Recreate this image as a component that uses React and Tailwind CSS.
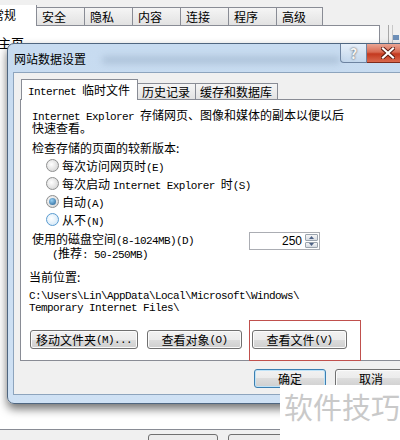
import React from 'react';

const A = ({ children }) => (
  <span className="font-['Liberation_Mono',monospace] text-[11px] leading-[0] tracking-[-0.6px]">{children}</span>
);

const Radio = ({ checked, hover, children }) => (
  <div className="flex h-[18px] items-center gap-[3px] pl-[14px]">
    <span
      className={`flex h-[13px] w-[13px] items-center justify-center rounded-full border ${
        hover
          ? 'border-[#5a9bd0] bg-[radial-gradient(circle_at_40%_40%,#ffffff,#c9e3f6)]'
          : 'border-[#8e8f8f] bg-[radial-gradient(circle_at_40%_40%,#ffffff,#cdcdcd)]'
      }`}
    >
      {checked && (
        <span className="h-[7px] w-[7px] rounded-full bg-[radial-gradient(circle_at_40%_35%,#9ad2f5,#1d5a8e)]" />
      )}
    </span>
    <span className="leading-[13px]">{children}</span>
  </div>
);

const Btn = ({ w, def, children }) => (
  <div
    className={`flex h-[19px] items-center justify-center rounded-[3px] border bg-[linear-gradient(#f2f2f2_0%,#ebebeb_50%,#dddddd_50%,#cfcfcf_100%)] leading-[13px] ${
      def ? 'border-[#3c7fb1] shadow-[inset_0_0_0_1px_#bfe3f8]' : 'border-[#707070] shadow-[inset_0_0_0_1px_#fbfbfb]'
    } ${w}`}
  >
    {children}
  </div>
);

const BgTab = ({ children }) => (
  <div className="h-[18px] w-[48px] border border-b-0 border-l-0 border-[#898c95] bg-gradient-to-b from-[#f5f5f5] to-[#e2e2e2] pl-[5px] leading-[17px]">
    {children}
  </div>
);

export default function App() {
  return (
    <div className="relative h-[440px] w-[400px] overflow-hidden bg-[#f0f0f0] font-['Noto_Sans_CJK_SC','Noto_Sans',sans-serif] text-[12px] text-black">
      {/* Internet options window behind */}
      <div className="flex h-full flex-col">
        <div className="flex h-[25px] items-end">
          <div className="relative z-10 -mb-[1px] flex h-[21px] w-[37px] justify-end overflow-hidden border-r border-[#898c95] bg-white pr-[20px] pt-[2px] leading-[16px]">
            <span className="whitespace-nowrap">常规</span>
          </div>
          <BgTab>安全</BgTab>
          <BgTab>隐私</BgTab>
          <BgTab>内容</BgTab>
          <BgTab>连接</BgTab>
          <BgTab>程序</BgTab>
          <div className="h-[18px] w-[46px] border border-b-0 border-l-0 border-[#898c95] bg-gradient-to-b from-[#f5f5f5] to-[#e2e2e2] pl-[5px] leading-[17px]">
            高级
          </div>
        </div>
        <div className="flex flex-1">
          <div className="w-[381px] border-y border-r border-[#898c95] bg-white">
            <div className="-ml-[2px] mt-[9px] text-[13px] leading-[16px]">主页</div>
          </div>
          <div className="flex flex-1 gap-[3px] pl-[8px]">
            <div className="w-px bg-[#a7a7a7]" />
            <div className="flex w-[8px] flex-col border-l border-[#c8c8c8] pt-[10px]">
              <div className="h-[5px] w-[6px] bg-[#6d8fb8]" />
            </div>
          </div>
        </div>
        <div className="flex h-[10px] gap-[10px] pl-[148px] pt-[4px]">
          <div className="h-[19px] w-[70px] rounded-[3px] border border-[#707070] bg-[#ececec]" />
          <div className="h-[19px] w-[70px] rounded-[3px] border border-[#707070] bg-[#ececec]" />
        </div>
      </div>

      {/* dialog */}
      <div className="absolute left-[7px] top-[43px] flex h-[361px] w-[420px] flex-col rounded-[7px] border border-[#4f6680] bg-gradient-to-b from-[#c7dbf0] to-[#cfe1f4] shadow-[0_5px_10px_rgba(0,0,0,0.55)]">
        <div className="flex h-[28px]">
          <div className="flex items-center pl-[6px] pt-[1px]">网站数据设置</div>
          <div className="ml-[16px] mt-[12px] h-[8px] flex-1 rounded bg-[#8ca3bb]/40 blur-[3px]" />
          <div className="mr-[16px] flex self-start">
            <div className="flex h-[19px] w-[27px] items-center justify-center rounded-bl-[4px] border border-t-0 border-[#6d83a0] bg-gradient-to-b from-[#e6eff9] to-[#c3d7ec] text-[14px] font-bold text-[#f4f4f4] [text-shadow:0_0_2px_#333]">
              ?
            </div>
            <div className="flex h-[19px] w-[43px] items-center justify-center rounded-br-[4px] border border-l-0 border-t-0 border-[#7e2a1c] bg-[linear-gradient(#eaa593_0%,#d86a52_45%,#c4391f_55%,#d9684d_100%)]">
              <svg width="14" height="12" viewBox="0 0 14 12">
                <path d="M2 1.5 L12 10.5 M12 1.5 L2 10.5" stroke="#5a1a10" strokeWidth="4" strokeLinecap="square" />
                <path d="M2 1.5 L12 10.5 M12 1.5 L2 10.5" stroke="#ffffff" strokeWidth="2.2" strokeLinecap="square" />
              </svg>
            </div>
          </div>
        </div>

        <div className="mx-[5px] h-[323px] overflow-hidden border border-[#8da4bd] bg-[#f0f0f0] pl-[6px] pt-[6px]">
          <div className="flex h-[20px] items-end">
            <div className="relative z-10 -mb-[1px] ml-[1px] h-[21px] w-[117px] border border-b-0 border-[#898c95] bg-white pl-[6px] pt-[3px] leading-[14px]">
              <A>Internet </A>临时文件
            </div>
            <div className="h-[16px] w-[58px] border border-b-0 border-l-0 border-[#898c95] bg-gradient-to-b from-[#f5f5f5] to-[#e3e3e3] pl-[4px] leading-[15px]">
              历史记录
            </div>
            <div className="h-[16px] w-[82px] border border-b-0 border-l-0 border-[#898c95] bg-gradient-to-b from-[#f5f5f5] to-[#e3e3e3] pl-[4px] leading-[15px]">
              缓存和数据库
            </div>
          </div>

          <div className="h-[262px] w-[400px] border border-[#898c95] bg-white pl-[11px] pt-[8px]">
            <div className="h-[13px] leading-[13px]">
              <A>Internet Explorer </A>存储网页、图像和媒体的副本以便以后
            </div>
            <div className="h-[13px] leading-[13px]">快速查看。</div>
            <div className="mt-[7px] h-[13px] leading-[13px]">检查存储的页面的较新版本:</div>
            <div className="mt-[2px]">
              <Radio>
                每次访问网页时<A>(E)</A>
              </Radio>
              <Radio>
                每次启动 <A>Internet Explorer </A>时<A>(S)</A>
              </Radio>
              <Radio checked>
                自动<A>(A)</A>
              </Radio>
              <Radio hover>
                从不<A>(N)</A>
              </Radio>
            </div>

            <div className="mt-[4px] flex">
              <div className="w-[217px]">
                <div className="h-[14px] leading-[14px]">
                  使用的磁盘空间<A>(8-1024MB)(D)</A>
                </div>
                <div className="h-[14px] pl-[20px] leading-[14px]">
                  <A>(</A>推荐<A>: 50-250MB)</A>
                </div>
              </div>
              <div className="flex h-[18px] w-[71px] border border-[#abadb3] bg-white">
                <div className="flex-1 pr-[2px] text-right font-['Liberation_Sans',sans-serif] text-[12px] leading-[16px]">
                  250
                </div>
                <div className="flex w-[15px] flex-col gap-px p-px">
                  <div className="flex flex-1 items-center justify-center rounded-[1px] border border-[#9ba4ae] bg-gradient-to-b from-[#f6f6f6] to-[#d6dbe2]">
                    <svg width="5" height="3" viewBox="0 0 5 3">
                      <path d="M0 3 L2.5 0 L5 3 Z" fill="#4d6185" />
                    </svg>
                  </div>
                  <div className="flex flex-1 items-center justify-center rounded-[1px] border border-[#9ba4ae] bg-gradient-to-b from-[#f6f6f6] to-[#d6dbe2]">
                    <svg width="5" height="3" viewBox="0 0 5 3">
                      <path d="M0 0 L2.5 3 L5 0 Z" fill="#4d6185" />
                    </svg>
                  </div>
                </div>
              </div>
            </div>

            <div className="-ml-[3px] mt-[10px] h-[13px] leading-[13px]">当前位置:</div>
            <div className="-ml-[3px] mt-[5px] h-[12px] leading-[12px]">
              <A>C:\Users\Lin\AppData\Local\Microsoft\Windows\</A>
            </div>
            <div className="-ml-[3px] h-[12px] leading-[12px]">
              <A>Temporary Internet Files\</A>
            </div>

            <div className="-ml-[2px] mt-[18px] flex">
              <Btn w="w-[108px]">
                移动文件夹<A>(M)...</A>
              </Btn>
              <div className="ml-[9px]">
                <Btn w="w-[95px]">
                  查看对象<A>(O)</A>
                </Btn>
              </div>
              <div className="ml-[10px]">
                <Btn w="w-[95px]">
                  查看文件<A>(V)</A>
                </Btn>
              </div>
            </div>
          </div>

          <div className="mt-[8px] flex gap-[9px] pl-[234px]">
            <Btn w="w-[72px]" def>
              确定
            </Btn>
            <Btn w="w-[72px]">取消</Btn>
          </div>
        </div>
      </div>

      {/* annotation */}
      <div className="absolute left-[249px] top-[320px] h-[41px] w-[112px] border border-[#c0504d]" />

      {/* watermark */}
      <div className="absolute left-[280px] top-[385px] h-[55px] w-[120px] bg-white pl-[4px] pt-[3px] text-[29px] leading-[36px] text-[#c9c9c9]">
        软件技巧
      </div>
    </div>
  );
}
